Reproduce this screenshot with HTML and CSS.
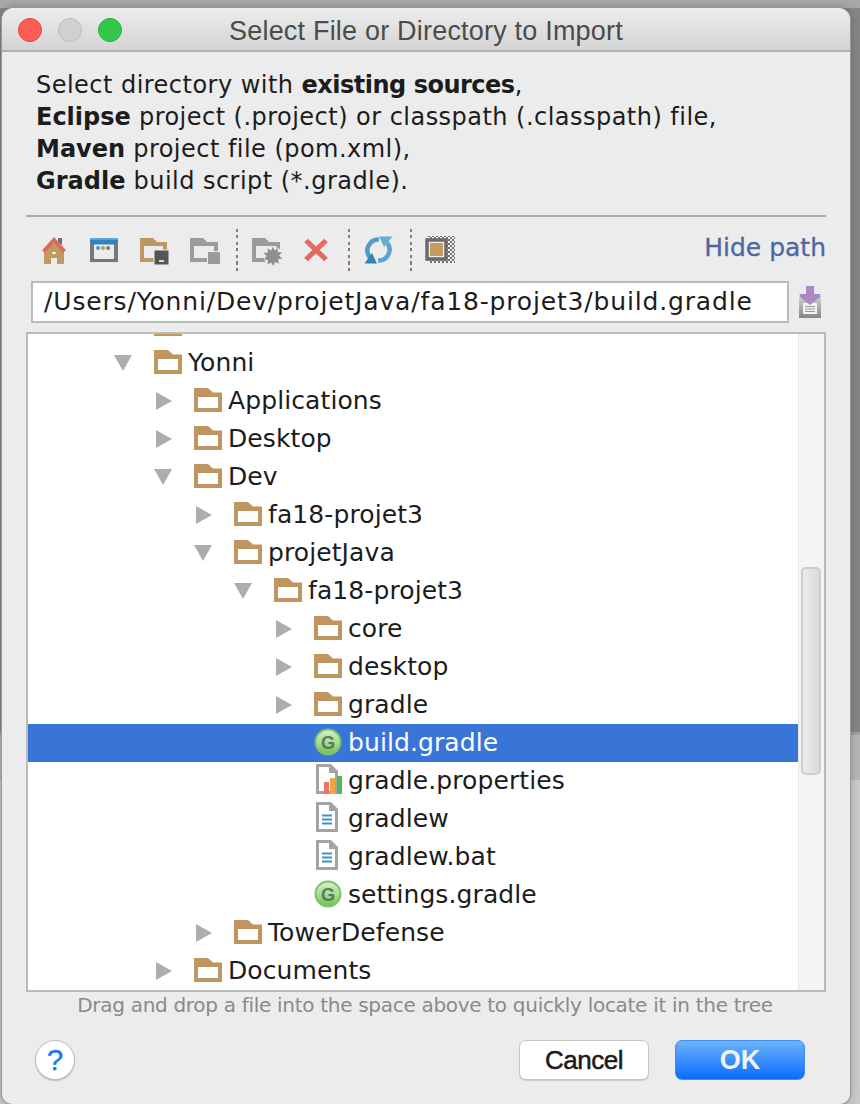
FILE: index.html
```html
<!DOCTYPE html>
<html lang="en">
<head>
<meta charset="utf-8">
<title>Select File or Directory to Import</title>
<link rel="stylesheet" href="styles.css">
</head>
<body>
<svg class="defs" width="0" height="0" aria-hidden="true">
  <defs>
    <symbol id="arrow-r" viewBox="0 0 18 18"><polygon points="2,0 18,9 2,18" fill="#adadad"/></symbol>
    <symbol id="arrow-d" viewBox="0 0 18 18"><polygon points="0,1 18,1 9,17" fill="#adadad"/></symbol>
    <symbol id="folder" viewBox="0 0 28 24"><path fill-rule="evenodd" fill="#bf9660" d="M0 0H14L19 4.500H28V24H0ZM4 9V20H24V9Z"/></symbol>
    <linearGradient id="gball" x1="0" y1="0" x2="0" y2="1"><stop offset="0" stop-color="#d4eec6"/><stop offset="0.55" stop-color="#a3dc8b"/><stop offset="1" stop-color="#72c45a"/></linearGradient>
    <symbol id="gfile" viewBox="0 0 28 28">
      <circle cx="14" cy="14" r="13.500" fill="#7cc266"/>
      <circle cx="14" cy="14" r="11.500" fill="url(#gball)"/>
      <text x="14" y="20.500" text-anchor="middle" class="gletter">G</text>
    </symbol>
    <symbol id="page" viewBox="0 0 28 30">
      <path fill-rule="evenodd" fill="#a4a4a4" d="M2 0H17L24 7V30H2ZM5 3V27H21V9H15V3Z"/>
      <path fill="#fff" d="M5 3H15V9H21V27H5Z"/>
      <path fill="#4592c4" d="M8 12.500H18V14.500H8ZM8 16.500H18V18.500H8ZM8 20.500H18V22.500H8Z"/>
    </symbol>
    <symbol id="props" viewBox="0 0 28 30">
      <path fill-rule="evenodd" fill="#a4a4a4" d="M2 0H17L24 7V30H2ZM5 3V27H21V9H15V3Z"/>
      <path fill="#fff" d="M5 3H15V9H21V27H5Z"/>
      <path fill="#ee7267" d="M10 18H15V30H10Z"/>
      <path fill="#efa64a" d="M16 14H21V30H16Z"/>
      <path fill="#4fb95a" d="M23 12H28V30H23Z"/>
    </symbol>
  </defs>
</svg>
<div class="desktop">
  <main class="window">
    <header class="titlebar">
      <div class="lights"><span class="light red"></span><span class="light grey"></span><span class="light green"></span></div>
      <h1 class="title">Select File or Directory to Import</h1>
    </header>
    <p class="desc">Select directory with <b class="tight">existing sources</b>,<br><b>Eclipse</b> project (.project) or classpath (.classpath) file,<br><b>Maven</b> project file (pom.xml),<br><b>Gradle</b> build script (*.gradle).</p>
    <div class="rule"></div>
    <div class="toolbar">
      <svg class="tb" viewBox="0 0 32 32"><path fill="#c19a62" d="M6 14L16 6L26 14V29H19V23H13V29H6Z"/><path fill="#6f6f6f" d="M20 3H24V10L20 7Z"/><path fill="#fff" d="M14.500 17H17.500V19H14.500Z"/><path d="M5.500 16.500L16 5L26.500 16.500" fill="none" stroke="#dc6a60" stroke-width="4"/></svg>
      <svg class="tb" viewBox="0 0 32 32"><path fill="#777" d="M2 9H30V27H2ZM6 9V24H26V9Z" fill-rule="evenodd"/><rect x="2" y="3" width="28" height="6.500" fill="#3583bd"/><rect x="2" y="3" width="28" height="2" fill="#5ea2d2"/><circle cx="10" cy="13" r="2" fill="#4c93c9"/><circle cx="15" cy="13" r="2" fill="#bf9660"/><circle cx="20" cy="13" r="2" fill="#7a7a7a"/></svg>
      <svg class="tb" viewBox="0 0 32 32"><path fill-rule="evenodd" fill="#bf9660" d="M2 3H15L19 7H29V27H2ZM6 11V23H25V11Z"/><rect x="16" y="15" width="15" height="15" fill="#555" stroke="#ececec"/><rect x="21" y="25" width="5" height="2" fill="#ddd"/></svg>
      <svg class="tb" viewBox="0 0 32 32"><path fill-rule="evenodd" fill="#9b9b9b" d="M2 3H15L19 7H30V27H2ZM6 11V23H26V11Z"/><rect x="19.500" y="16.500" width="13" height="13" fill="#9b9b9b" stroke="#ececec"/></svg>
      <span class="sep"></span>
      <svg class="tb" viewBox="0 0 32 32"><path fill-rule="evenodd" fill="#9b9b9b" d="M2 3H15L19 7H30V27H2ZM6 11V23H26V11Z"/><circle cx="23" cy="21" r="9.500" fill="#ececec"/><path fill="#8e8e8e" d="M23 11.500L24.500 15.500L28 13L27.500 17L32 17.500L29 20.500L32.500 23.500L28 24.500L29 28.500L25 27L23.500 31L21 27.500L17.500 29.500L18 25L14 24.500L16.500 21L13.500 18L18 17.500L17.500 13.500L21 15.500Z"/></svg>
      <svg class="tb" viewBox="0 0 32 32"><path d="M6 5.500L26 24.500M26 5.500L6 24.500" fill="none" stroke="#e2695c" stroke-width="5"/></svg>
      <span class="sep"></span>
      <svg class="tb" viewBox="0 0 32 32"><path d="M17 4.500A11 11 0 0 0 8 22.500" fill="none" stroke="#4f9ccb" stroke-width="4.500"/><path d="M16 25.500A11 11 0 0 0 25 7.500" fill="none" stroke="#5aa5d2" stroke-width="4.500"/><polygon points="17,1.500 30.500,1.500 22,12" fill="#66acd5"/><polygon points="2.500,28.500 15,28.500 10,18" fill="#3583b7"/></svg>
      <span class="sep"></span>
      <svg class="tb" viewBox="0 0 32 32"><defs><pattern id="chk" width="4" height="4" patternUnits="userSpaceOnUse"><rect width="4" height="4" fill="#f4f4f4"/><rect width="2" height="2" fill="#6e6e6e"/><rect x="2" y="2" width="2" height="2" fill="#6e6e6e"/></pattern></defs><rect x="4" y="1" width="27" height="27" fill="url(#chk)"/><rect x="3" y="5" width="19" height="19" fill="#ececec" stroke="#6a6a6a" stroke-width="3.500" /><rect x="6" y="8" width="13" height="13" fill="#c79a5c"/></svg>
      <a class="hide" href="#">Hide path</a>
    </div>
    <div class="pathrow">
      <div class="pathfield">/Users/Yonni/Dev/projetJava/fa18-projet3/build.gradle</div>
      <svg class="dl" viewBox="0 0 22 32"><defs><linearGradient id="dlg" x1="0" y1="0" x2="0" y2="1"><stop offset="0" stop-color="#dcdcdc"/><stop offset="1" stop-color="#858585"/></linearGradient></defs><path fill="url(#dlg)" d="M0 8H22V32H0Z"/><path fill="#f2f2f2" d="M4 17H18V28H4Z"/><path fill="#9a9a9a" d="M6 20H16V21H6ZM6 22.500H16V23.500H6ZM6 25H16V26H6Z"/><path fill="#a98ac6" d="M7 0H15V8H21V11L11 19L1 11V8H7Z"/></svg>
    </div>
    <section class="panel">
      <div class="tree">
        <div class="row d0"><span class="slot"></span><svg class="ico fold"><use href="#folder"/></svg><span class="label">Users</span></div>
        <div class="row d0"><span class="slot"><svg class="arr"><use href="#arrow-d"/></svg></span><svg class="ico fold"><use href="#folder"/></svg><span class="label">Yonni</span></div>
        <div class="row d1"><span class="slot"><svg class="arr"><use href="#arrow-r"/></svg></span><svg class="ico fold"><use href="#folder"/></svg><span class="label">Applications</span></div>
        <div class="row d1"><span class="slot"><svg class="arr"><use href="#arrow-r"/></svg></span><svg class="ico fold"><use href="#folder"/></svg><span class="label">Desktop</span></div>
        <div class="row d1"><span class="slot"><svg class="arr"><use href="#arrow-d"/></svg></span><svg class="ico fold"><use href="#folder"/></svg><span class="label">Dev</span></div>
        <div class="row d2"><span class="slot"><svg class="arr"><use href="#arrow-r"/></svg></span><svg class="ico fold"><use href="#folder"/></svg><span class="label">fa18-projet3</span></div>
        <div class="row d2"><span class="slot"><svg class="arr"><use href="#arrow-d"/></svg></span><svg class="ico fold"><use href="#folder"/></svg><span class="label">projetJava</span></div>
        <div class="row d3"><span class="slot"><svg class="arr"><use href="#arrow-d"/></svg></span><svg class="ico fold"><use href="#folder"/></svg><span class="label">fa18-projet3</span></div>
        <div class="row d4"><span class="slot"><svg class="arr"><use href="#arrow-r"/></svg></span><svg class="ico fold"><use href="#folder"/></svg><span class="label">core</span></div>
        <div class="row d4"><span class="slot"><svg class="arr"><use href="#arrow-r"/></svg></span><svg class="ico fold"><use href="#folder"/></svg><span class="label">desktop</span></div>
        <div class="row d4"><span class="slot"><svg class="arr"><use href="#arrow-r"/></svg></span><svg class="ico fold"><use href="#folder"/></svg><span class="label">gradle</span></div>
        <div class="row d4 selected"><span class="slot"></span><svg class="ico ball"><use href="#gfile"/></svg><span class="label">build.gradle</span></div>
        <div class="row d4"><span class="slot"></span><svg class="ico tall"><use href="#props"/></svg><span class="label">gradle.properties</span></div>
        <div class="row d4"><span class="slot"></span><svg class="ico tall"><use href="#page"/></svg><span class="label">gradlew</span></div>
        <div class="row d4"><span class="slot"></span><svg class="ico tall"><use href="#page"/></svg><span class="label">gradlew.bat</span></div>
        <div class="row d4"><span class="slot"></span><svg class="ico ball"><use href="#gfile"/></svg><span class="label">settings.gradle</span></div>
        <div class="row d2"><span class="slot"><svg class="arr"><use href="#arrow-r"/></svg></span><svg class="ico fold"><use href="#folder"/></svg><span class="label">TowerDefense</span></div>
        <div class="row d1"><span class="slot"><svg class="arr"><use href="#arrow-r"/></svg></span><svg class="ico fold"><use href="#folder"/></svg><span class="label">Documents</span></div>
      </div>
      <div class="scroll"><div class="thumb"></div></div>
    </section>
    <p class="hint">Drag and drop a file into the space above to quickly locate it in the tree</p>
    <footer class="actions">
      <button class="help" type="button">?</button>
      <button class="btn cancel" type="button">Cancel</button>
      <button class="btn ok" type="button">OK</button>
    </footer>
  </main>
</div>
</body>
</html>
```
FILE: styles.css
```css
* { box-sizing: border-box; }
html, body { margin: 0; padding: 0; height: 100%; }
body { overflow: hidden; font-family: "DejaVu Sans", sans-serif; color: #1c1c1c; }
.defs { position: absolute; }
.gletter { font: bold 18px "Liberation Sans", sans-serif; fill: #5a7560; }

.desktop {
  height: 1104px;
  padding: 8px 10px 0 2px;
  background: linear-gradient(to bottom, #a8a8a8 0, #a8a8a8 8px, #868686 8px, #868686 732px, #a2a2a2 732px, #a2a2a2 735px, #b6b6b6 735px, #b6b6b6 780px, #cacaca 780px);
}
.window {
  height: 1096px;
  background: #ececec;
  border-radius: 12px 12px 10px 10px;
  overflow: hidden;
  display: flex;
  flex-direction: column;
  box-shadow: 0 0 0 1px #999, 0 0 8px rgba(0,0,0,.3);
}

.titlebar {
  height: 44px;
  flex: none;
  display: flex;
  align-items: center;
  justify-content: center;
  position: relative;
  background: linear-gradient(to bottom, #ededed, #d3d3d3);
  border-bottom: 2px solid #b2b2b2;
}
.lights { position: absolute; left: 16px; top: 10px; display: flex; gap: 16px; }
.light { width: 24px; height: 24px; border-radius: 50%; }
.red { background: #fc5b57; border: 1px solid #e2463f; }
.grey { background: #d0d0d0; border: 1px solid #bcbcbc; }
.green { background: #34c84a; border: 1px solid #2aae3d; }
.title { margin: 0; font: 400 27px/1 "Liberation Sans", sans-serif; letter-spacing: .2px; color: #4b4b4b; position: relative; top: 2px; }

.desc { margin: 17px 0 0 34px; font-size: 24px; line-height: 32px; height: 128px; flex: none; letter-spacing: .47px; }
.desc b { letter-spacing: 0; }
.desc b.tight { letter-spacing: -.5px; }
.rule { margin: 18px 24px 0 24px; height: 2px; background: #ababab; flex: none; }

.toolbar {
  flex: none;
  height: 44px;
  margin-top: 12px;
  padding: 0 24px 0 36px;
  display: flex;
  align-items: center;
  gap: 18px;
}
.tb { width: 32px; height: 32px; flex: none; }
.sep {
  width: 2px; height: 44px; flex: none; margin: 0 -6px 0 -2px;
  background: repeating-linear-gradient(to bottom, #7c7c7c 0, #7c7c7c 3px, transparent 3px, transparent 6.5px);
}
.hide { margin: 0 0 8px auto; color: #4f66a3; font-size: 25px; text-decoration: none; -webkit-text-stroke: .3px #4f66a3; }

.pathrow { flex: none; display: flex; align-items: center; margin: 8px 0 0 29px; height: 42px; gap: 10px; }
.pathfield {
  width: 758px; height: 42px;
  border: 2px solid #bbb;
  background: #fff;
  padding-left: 11px;
  font-size: 25px;
  letter-spacing: .83px;
  line-height: 38px;
  white-space: nowrap;
}
.dl { width: 22px; height: 32px; flex: none; }

.panel {
  flex: none;
  margin: 9px 0 0 24px;
  width: 800px;
  height: 660px;
  border: 2px solid #bbb;
  background: #fff;
  display: flex;
  overflow: hidden;
}
.tree { flex: 1; min-width: 0; margin-top: -28px; }
.row { height: 38px; display: flex; align-items: center; font-size: 25px; letter-spacing: .1px; white-space: nowrap; }
.d0 { padding-left: 86px; }
.d1 { padding-left: 126px; }
.d2 { padding-left: 166px; }
.d3 { padding-left: 206px; }
.d4 { padding-left: 246px; }
.selected { background: #3875d7; color: #fff; }
.slot { width: 40px; flex: none; display: flex; align-items: center; }
.arr { width: 18px; height: 18px; display: block; }
.ico { width: 28px; flex: none; margin-right: 6px; }
.ico.fold { height: 24px; margin-bottom: 2px; }
.ico.ball { height: 28px; margin-bottom: 2px; }
.ico.tall { height: 30px; margin-bottom: 4px; }
.label { padding-bottom: 1px; }
.scroll { width: 26px; flex: none; background: #f4f4f4; border-left: 1px solid #e6e6e6; padding: 233px 0 0 2px; }
.thumb {
  width: 20px; height: 208px;
  border: 2px solid #cdcdcd;
  border-radius: 5px;
  background: linear-gradient(to right, #ececec, #d9d9d9);
}

.hint { flex: none; margin: 0; height: 26px; text-align: center; font-size: 20px; letter-spacing: -.3px; line-height: 26px; color: #8a8a8a; padding-right: 2px; }

.actions { flex: 1; display: flex; align-items: flex-start; padding: 22px 0 0 33px; }
.help {
  width: 40px; height: 40px; padding: 0;
  border-radius: 50%;
  border: 1px solid #bdbdbd;
  background: #fff;
  box-shadow: 0 1px 1px rgba(0,0,0,.2);
  color: #1478f6;
  font: 400 29px/1 "Liberation Sans", sans-serif;
  -webkit-text-stroke: .4px #1478f6;
}
.btn {
  height: 40px; padding: 0;
  border-radius: 7px;
  font: 400 26px/1 "Liberation Sans", sans-serif;
}
.cancel {
  width: 130px; margin-left: 444px;
  background: #fff;
  border: 1px solid #c6c6c6;
  box-shadow: 0 1px 1px rgba(0,0,0,.15);
  color: #1a1a1a;
  letter-spacing: -0.5px;
  -webkit-text-stroke: .5px #1a1a1a;
}
.ok {
  width: 130px; margin-left: 26px;
  background: linear-gradient(to bottom, #6cb3fa, #0a6cfd);
  border: 1px solid #3f8ef5;
  color: #eef3fb;
  font-size: 27px;
  font-weight: 700;
}
```
